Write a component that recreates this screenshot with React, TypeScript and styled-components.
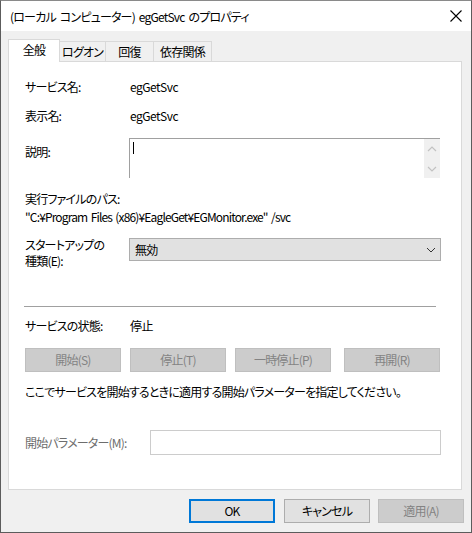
import React from 'react';
import styled, { createGlobalStyle } from 'styled-components';

const GlobalStyle = createGlobalStyle`
  html, body {
    margin: 0;
    padding: 0;
    background: #ffffff;
  }
  * {
    box-sizing: border-box;
  }
`;

const tabs = [
  { label: '全般', width: 52 },
  { label: 'ログオン', width: 46 },
  { label: '回復', width: 48 },
  { label: '依存関係', width: 58 },
];

const serviceButtons = [
  { label: '開始(S)', gap: 0 },
  { label: '停止(T)', gap: 9 },
  { label: '一時停止(P)', gap: 9 },
  { label: '再開(R)', gap: 13 },
];

const App = () => {
  return (
    <>
      <GlobalStyle />
      <Window>
        <TitleBar>
          <Title>(ローカル コンピューター) egGetSvc のプロパティ</Title>
          <CloseButton>
            <svg width="12" height="12" viewBox="0 0 12 12">
              <path d="M0.5 0.5 L11.5 11.5 M11.5 0.5 L0.5 11.5" stroke="#000" strokeWidth="1.1" fill="none" />
            </svg>
          </CloseButton>
        </TitleBar>

        <Body>
          <TabStrip>
            {tabs.map((t, i) => (
              <Tab key={t.label} active={i === 0} w={t.width}>
                {t.label}
              </Tab>
            ))}
          </TabStrip>

          <Panel>
            <Row top={15} height={20}>
              <Label>サービス名:</Label>
              <Value>egGetSvc</Value>
            </Row>
            <Row top={9} height={20}>
              <Label>表示名:</Label>
              <Value>egGetSvc</Value>
            </Row>
            <Row top={12} height={40} alignTop>
              <Label offset={6}>説明:</Label>
              <TextArea>
                <Caret />
                <ScrollBar>
                  <svg width="10" height="6" viewBox="0 0 10 6">
                    <path d="M1 5 L5 1 L9 5" stroke="#c2c2c2" strokeWidth="1.2" fill="none" />
                  </svg>
                  <svg width="10" height="6" viewBox="0 0 10 6">
                    <path d="M1 1 L5 5 L9 1" stroke="#c2c2c2" strokeWidth="1.2" fill="none" />
                  </svg>
                </ScrollBar>
              </TextArea>
            </Row>

            <PathBlock>
              <TextLine>実行ファイルのパス:</TextLine>
              <PathText>"C:¥Program Files (x86)¥EagleGet¥EGMonitor.exe" /svc</PathText>
            </PathBlock>

            <Row top={11} height={32} alignTop>
              <Label>
                <StackLine>スタートアップの</StackLine>
                <StackLine>種類(E):</StackLine>
              </Label>
              <Select>
                <span>無効</span>
                <svg width="10" height="6" viewBox="0 0 10 6">
                  <path d="M1 1 L5 5 L9 1" stroke="#333" strokeWidth="1" fill="none" />
                </svg>
              </Select>
            </Row>

            <Separator />

            <Row top={9} height={20}>
              <Label>サービスの状態:</Label>
              <Value>停止</Value>
            </Row>

            <ButtonRow>
              {serviceButtons.map((b) => (
                <DialogButton key={b.label} disabled w={96} gapLeft={b.gap}>
                  {b.label}
                </DialogButton>
              ))}
            </ButtonRow>

            <Row top={10} height={20}>
              <TextLine>ここでサービスを開始するときに適用する開始パラメーターを指定してください。</TextLine>
            </Row>

            <Row top={28} height={25}>
              <Label disabled wide>
                開始パラメーター(M):
              </Label>
              <ParamInput />
            </Row>
          </Panel>

          <Footer>
            <DialogButton w={86} primary>
              OK
            </DialogButton>
            <DialogButton w={86}>キャンセル</DialogButton>
            <DialogButton w={86} disabled gapLeft={-1}>
              適用(A)
            </DialogButton>
          </Footer>
        </Body>
      </Window>
    </>
  );
};

export default App;

const uiFont = `'Noto Sans CJK JP', 'Noto Sans', sans-serif`;

const Window = styled.div`
  width: 472px;
  height: 533px;
  display: flex;
  flex-direction: column;
  border: 1px solid #5c5c5c;
  border-top-color: #8a8a8a;
  background: #f0f0f0;
  font-family: ${uiFont};
  font-size: 12px;
  font-feature-settings: 'palt';
  letter-spacing: -0.8px;
  word-spacing: 2px;
  color: #000;
  overflow: hidden;
`;

const TitleBar = styled.div`
  height: 30px;
  flex: none;
  display: flex;
  align-items: center;
  justify-content: space-between;
  background: #ffffff;
  padding: 0 9px 0 9px;
`;

const Title = styled.div`
  line-height: 16px;
  margin-top: 1px;
`;

const CloseButton = styled.div`
  width: 12px;
  height: 12px;
  display: flex;
`;

const Body = styled.div`
  flex: 1;
  display: flex;
  flex-direction: column;
  padding: 8px 9px 0 7px;
`;

const TabStrip = styled.div`
  display: flex;
  align-items: flex-end;
  height: 23px;
  position: relative;
  z-index: 1;
  margin-bottom: -1px;
`;

const Tab = styled.div<{ active?: boolean; w: number }>`
  width: ${(p) => p.w}px;
  height: ${(p) => (p.active ? '23px' : '21px')};
  display: flex;
  align-items: center;
  justify-content: center;
  white-space: nowrap;
  padding-bottom: ${(p) => (p.active ? '2px' : '0')};
  border: 1px solid #d9d9d9;
  border-bottom: ${(p) => (p.active ? 'none' : '1px solid #d9d9d9')};
  border-left: ${(p) => (p.active ? '1px solid #d9d9d9' : 'none')};
  background: ${(p) => (p.active ? '#ffffff' : '#f0f0f0')};
  line-height: 16px;
`;

const Panel = styled.div`
  height: 429px;
  flex: none;
  display: flex;
  flex-direction: column;
  background: #ffffff;
  border: 1px solid #d9d9d9;
  padding: 0 20px 0 16px;
`;

const Row = styled.div<{ top: number; height: number; alignTop?: boolean }>`
  display: flex;
  align-items: ${(p) => (p.alignTop ? 'flex-start' : 'center')};
  margin-top: ${(p) => p.top}px;
  height: ${(p) => p.height}px;
  flex: none;
`;

const Label = styled.div<{ disabled?: boolean; wide?: boolean; offset?: number }>`
  width: ${(p) => (p.wide ? '125px' : '104px')};
  flex: none;
  line-height: 16px;
  padding-top: ${(p) => p.offset ?? 0}px;
  white-space: nowrap;
  color: ${(p) => (p.disabled ? '#6d6d6d' : '#000')};
`;

const StackLine = styled.div`
  line-height: 16px;
`;

const Value = styled.div`
  line-height: 16px;
  padding-left: 1px;
  letter-spacing: -0.5px;
`;

const TextLine = styled.div`
  line-height: 18px;
  white-space: nowrap;
`;

const PathText = styled(TextLine)`
  letter-spacing: -0.85px;
  word-spacing: 1.5px;
`;

const TextArea = styled.div`
  width: 311px;
  height: 40px;
  display: flex;
  justify-content: space-between;
  border-top: 1px solid #a0a0a0;
  border-left: 1px solid #a0a0a0;
  background: #ffffff;
  padding: 3px 0 0 3px;
`;

const Caret = styled.div`
  width: 1px;
  height: 12px;
  background: #000;
`;

const ScrollBar = styled.div`
  width: 16px;
  height: 39px;
  margin-top: -3px;
  background: #f0f0f0;
  display: flex;
  flex-direction: column;
  justify-content: space-between;
  align-items: center;
  padding: 7px 0 6px;
`;

const PathBlock = styled.div`
  margin-top: 12px;
  display: flex;
  flex-direction: column;
  flex: none;
`;

const Select = styled.div`
  width: 312px;
  height: 23px;
  margin-top: 1px;
  display: flex;
  align-items: center;
  justify-content: space-between;
  background: #e1e1e1;
  border: 1px solid #adadad;
  padding: 0 4px 0 5px;
  line-height: 16px;
`;

const Separator = styled.div`
  margin-top: 37px;
  height: 1px;
  width: 412px;
  margin-left: -1px;
  background: #a0a0a0;
  flex: none;
`;

const ButtonRow = styled.div`
  display: flex;
  margin-top: 12px;
  flex: none;
`;

const DialogButton = styled.button<{ w: number; primary?: boolean; gapLeft?: number }>`
  width: ${(p) => p.w}px;
  height: 24px;
  flex: none;
  margin-left: ${(p) => p.gapLeft ?? 0}px;
  font-family: ${uiFont};
  font-size: 12px;
  font-feature-settings: 'palt';
  letter-spacing: -0.8px;
  line-height: 16px;
  padding: 0;
  color: #000;
  background: #e1e1e1;
  border: ${(p) => (p.primary ? '2px solid #0078d7' : '1px solid #adadad')};

  &:disabled {
    color: #838383;
    background: #cccccc;
    border-color: #bfbfbf;
  }
`;

const ParamInput = styled.div`
  width: 291px;
  height: 25px;
  border: 1px solid #cccccc;
  background: #ffffff;
`;

const Footer = styled.div`
  display: flex;
  justify-content: flex-end;
  gap: 9px;
  padding-top: 9px;
  margin-right: -2px;
`;
